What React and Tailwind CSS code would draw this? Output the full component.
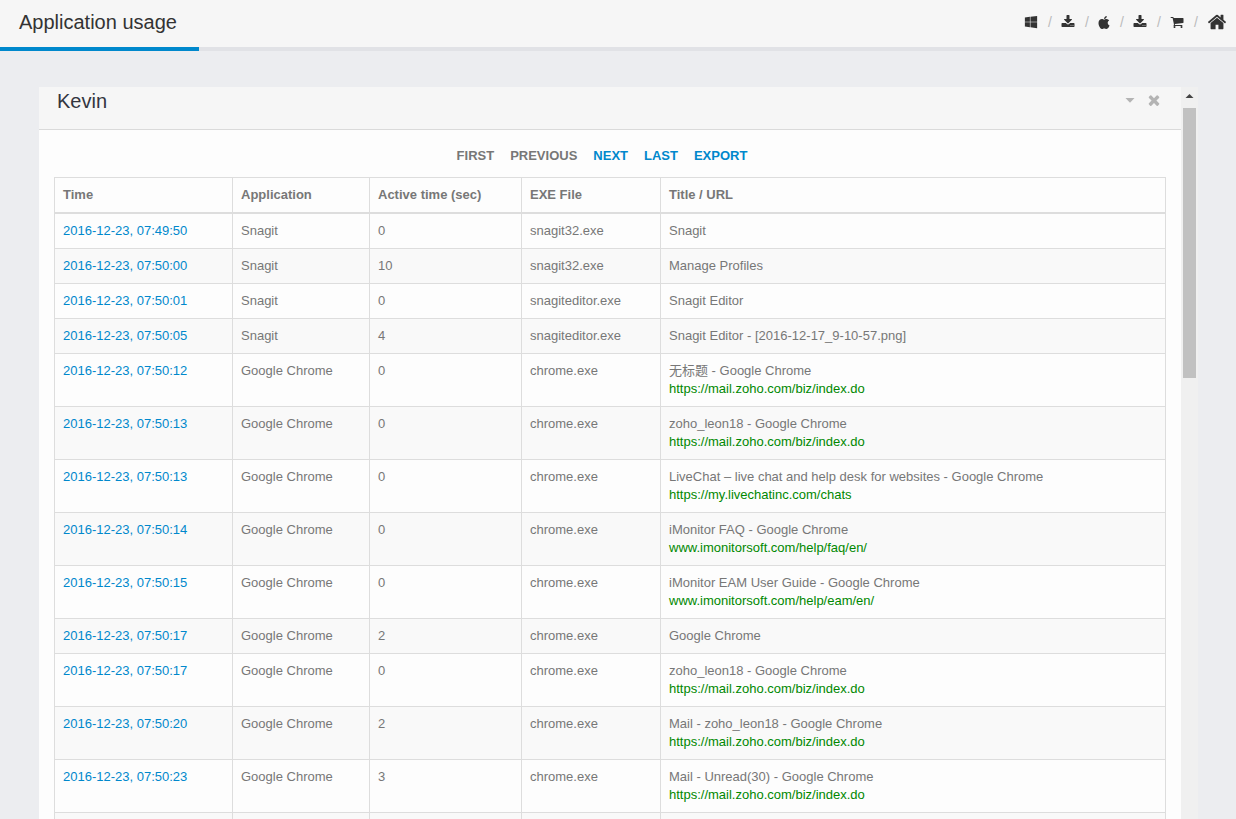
import { FaApple, FaWindows } from "react-icons/fa";

const MAIL_URL = "https://mail.zoho.com/biz/index.do";

const rows = [
  { time: "2016-12-23, 07:49:50", app: "Snagit", active: 0, exe: "snagit32.exe", title: "Snagit" },
  { time: "2016-12-23, 07:50:00", app: "Snagit", active: 10, exe: "snagit32.exe", title: "Manage Profiles" },
  { time: "2016-12-23, 07:50:01", app: "Snagit", active: 0, exe: "snagiteditor.exe", title: "Snagit Editor" },
  { time: "2016-12-23, 07:50:05", app: "Snagit", active: 4, exe: "snagiteditor.exe", title: "Snagit Editor - [2016-12-17_9-10-57.png]" },
  { time: "2016-12-23, 07:50:12", app: "Google Chrome", active: 0, exe: "chrome.exe", title: "无标题 - Google Chrome", url: MAIL_URL },
  { time: "2016-12-23, 07:50:13", app: "Google Chrome", active: 0, exe: "chrome.exe", title: "zoho_leon18 - Google Chrome", url: MAIL_URL },
  { time: "2016-12-23, 07:50:13", app: "Google Chrome", active: 0, exe: "chrome.exe", title: "LiveChat – live chat and help desk for websites - Google Chrome", url: "https://my.livechatinc.com/chats" },
  { time: "2016-12-23, 07:50:14", app: "Google Chrome", active: 0, exe: "chrome.exe", title: "iMonitor FAQ - Google Chrome", url: "www.imonitorsoft.com/help/faq/en/" },
  { time: "2016-12-23, 07:50:15", app: "Google Chrome", active: 0, exe: "chrome.exe", title: "iMonitor EAM User Guide - Google Chrome", url: "www.imonitorsoft.com/help/eam/en/" },
  { time: "2016-12-23, 07:50:17", app: "Google Chrome", active: 2, exe: "chrome.exe", title: "Google Chrome" },
  { time: "2016-12-23, 07:50:17", app: "Google Chrome", active: 0, exe: "chrome.exe", title: "zoho_leon18 - Google Chrome", url: MAIL_URL },
  { time: "2016-12-23, 07:50:20", app: "Google Chrome", active: 2, exe: "chrome.exe", title: "Mail - zoho_leon18 - Google Chrome", url: MAIL_URL },
  { time: "2016-12-23, 07:50:23", app: "Google Chrome", active: 3, exe: "chrome.exe", title: "Mail - Unread(30) - Google Chrome", url: MAIL_URL },
  {},
];

const pages = [
  { label: "First", disabled: true },
  { label: "Previous", disabled: true },
  { label: "Next" },
  { label: "Last" },
  { label: "Export" },
];

function Glyph({ d, className }) {
  return (
    <svg viewBox="0 0 1792 1792" fill="currentColor" className={className} aria-hidden="true">
      <path d={d} />
    </svg>
  );
}

const DOWNLOAD =
  "M1344 1344q0-26-19-45t-45-19-45 19-19 45 19 45 45 19 45-19 19-45zm256 0q0-26-19-45t-45-19-45 19-19 45 19 45 45 19 45-19 19-45zm128-224v320q0 40-28 68t-68 28h-1472q-40 0-68-28t-28-68v-320q0-40 28-68t68-28h465l135 136q58 56 136 56t136-56l136-136h464q40 0 68 28t28 68zm-325-569q17 41-14 70l-448 448q-18 19-45 19t-45-19l-448-448q-31-29-14-70 17-39 59-39h256v-448q0-26 19-45t45-19h256q26 0 45 19t19 45v448h256q42 0 59 39z";
const CART =
  "M704 1536q0 52-38 90t-90 38-90-38-38-90 38-90 90-38 90 38 38 90zm896 0q0 52-38 90t-90 38-90-38-38-90 38-90 90-38 90 38 38 90zm128-1088v512q0 24-16.5 42.5t-40.5 21.5l-1044 122q13 60 13 70 0 16-24 64h920q26 0 45 19t19 45-19 45-45 19h-1024q-26 0-45-19t-19-45q0-11 8-31.5t16-36 21.5-40 15.5-29.5l-177-823h-204q-26 0-45-19t-19-45 19-45 45-19h256q16 0 28.5 6.5t19.5 15.5 13 24.5 8 26 5.5 29.5 4.5 26h1201q26 0 45 19t19 45z";
const HOME =
  "M1472 992v480q0 26-19 45t-45 19h-384v-384h-256v384h-384q-26 0-45-19t-19-45v-480q0-1 .5-3t.5-3l575-474 575 474q1 2 1 6zm223-69l-62 74q-8 9-21 11h-3q-13 0-21-7l-692-577-692 577q-12 8-24 7-13-2-21-11l-62-74q-8-10-7-23.5t11-21.5l719-599q32-26 76-26t76 26l244 204v-195q0-14 9-23t23-9h192q14 0 23 9t9 23v408l219 182q10 8 11 21.5t-7 23.5z";
const TIMES =
  "M1490 1322q0 40-28 68l-136 136q-28 28-68 28t-68-28l-294-294-294 294q-28 28-68 28t-68-28l-136-136q-28-28-28-68t28-68l294-294-294-294q-28-28-28-68t28-68l136-136q28-28 68-28t68 28l294 294 294-294q28-28 68-28t68 28l136 136q28 28 28 68t-28 68l-294 294 294 294q28 28 28 68z";

const shortcuts = [
  { label: "Windows agent", icon: <FaWindows className="size-[14px]" /> },
  { label: "Download Windows agent", icon: <Glyph d={DOWNLOAD} className="size-[14px]" /> },
  { label: "Mac agent", icon: <FaApple className="h-[15px] w-3" /> },
  { label: "Download Mac agent", icon: <Glyph d={DOWNLOAD} className="size-[14px]" /> },
  { label: "Buy", icon: <Glyph d={CART} className="size-[14px]" /> },
  { label: "Home", icon: <Glyph d={HOME} className="size-5" /> },
];

function PageHeader() {
  return (
    <header className="flex h-[51px] shrink-0 bg-[#f6f6f6]">
      <h1 className="border-b-4 border-[#0088cc] pl-[19px] pr-[22px] text-xl leading-[44px] text-[#333]">
        Application usage
      </h1>
      <nav className="flex flex-1 items-center justify-end border-b-4 border-[#e1e2e6] pr-[9px] pb-[3px]">
        <ol className="flex items-center gap-[10px] text-[#333]">
          {shortcuts.map((item, i) => (
            <li key={item.label} className="flex items-center gap-[10px]">
              {i > 0 && <span className="w-[3px] text-sm leading-none text-[#bbb]">/</span>}
              <a href="#" aria-label={item.label}>
                {item.icon}
              </a>
            </li>
          ))}
        </ol>
      </nav>
    </header>
  );
}

function Pager() {
  return (
    <div className="flex justify-center">
      {pages.map((page) => (
        <button
          key={page.label}
          type="button"
          disabled={page.disabled}
          className="mr-4 font-bold uppercase leading-[18px] text-[#0088cc] disabled:text-[#777]"
        >
          {page.label}
        </button>
      ))}
    </div>
  );
}

function UsageTable() {
  return (
    <table className="mt-3 w-full table-fixed border-collapse border border-[#ddd] text-left">
      <colgroup>
        <col className="w-[178px]" />
        <col className="w-[137px]" />
        <col className="w-[152px]" />
        <col className="w-[139px]" />
        <col />
      </colgroup>
      <thead>
        <tr>
          {["Time", "Application", "Active time (sec)", "EXE File", "Title / URL"].map((name) => (
            <th key={name} className="border border-b-2 border-[#ddd] p-2 font-bold">
              {name}
            </th>
          ))}
        </tr>
      </thead>
      <tbody>
        {rows.map((row, i) => (
          <tr key={i} className="h-[35px] align-top even:bg-[#f9f9f9]">
            <td className="border border-[#ddd] p-2">
              {row.time && (
                <a href="#" className="text-[#0088cc]">{row.time}</a>
              )}
            </td>
            <td className="border border-[#ddd] p-2">{row.app}</td>
            <td className="border border-[#ddd] p-2">{row.active}</td>
            <td className="border border-[#ddd] p-2">{row.exe}</td>
            <td className="border border-[#ddd] p-2">
              {row.title}
              {row.url && (
                <a href="#" className="block text-[#008800]">{row.url}</a>
              )}
            </td>
          </tr>
        ))}
      </tbody>
    </table>
  );
}

function ScrollTrack() {
  return (
    <div className="flex w-[17px] shrink-0 flex-col items-center bg-[#f0f0f0]" aria-hidden="true">
      <svg viewBox="0 0 17 21" className="h-[21px] w-[17px] shrink-0 fill-[#444]">
        <path d="M4.500 11h8L8.500 7z" />
      </svg>
      <div className="h-[270px] w-[13px] shrink-0 bg-[#c1c1c1]" />
    </div>
  );
}

export default function App() {
  return (
    <div className="flex h-screen flex-col overflow-hidden bg-[#ecedf0] font-['Liberation_Sans','Noto_Sans_CJK_SC',sans-serif] text-[13px] leading-[18px] text-[#777]">
      <PageHeader />
      <main className="flex min-h-0 flex-1 pl-[39px] pr-[38px] pt-9">
        <section className="min-w-0 flex-1 overflow-y-auto bg-[#fdfdfd] [scrollbar-width:none]">
          <header className="flex h-[43px] items-start justify-between border-b border-[#dadada] bg-[#f6f6f6] pl-[18px] pr-[19px]">
            <h2 className="text-xl leading-7 text-[#33353f]">Kevin</h2>
            <div className="flex h-[26px] items-center gap-[11px] text-[#b4b4b4]">
              <button type="button" aria-label="Collapse">
                <svg viewBox="0 0 10 5" fill="currentColor" className="h-[5px] w-[10px]">
                  <path d="M0.500 0h9L5 4.800z" />
                </svg>
              </button>
              <button type="button" aria-label="Close">
                <Glyph d={TIMES} className="size-4" />
              </button>
            </div>
          </header>
          <div className="px-[15px] pt-[17px]">
            <Pager />
            <UsageTable />
          </div>
        </section>
        <ScrollTrack />
      </main>
    </div>
  );
}
